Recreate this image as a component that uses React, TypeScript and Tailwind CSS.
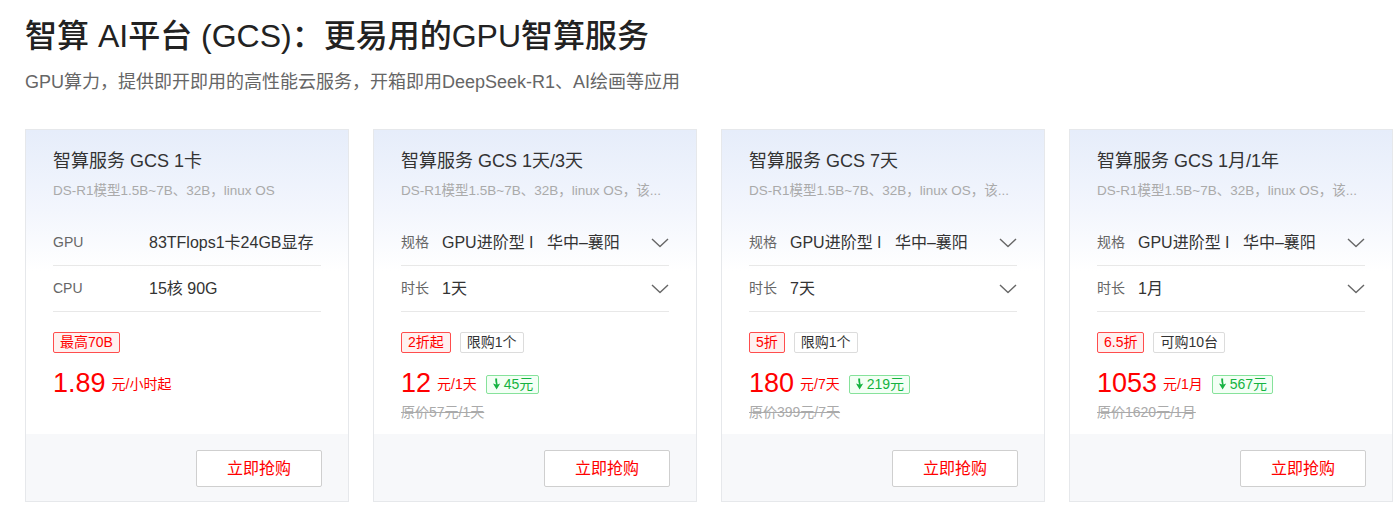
import React from "react";

type Row = { label: string; value: string; select?: boolean };
type Card = {
  title: string;
  desc: string;
  rows: Row[];
  redTag: string;
  grayTag?: string;
  price: string;
  unit: string;
  save?: string;
  original?: string;
  wideLabel?: boolean;
};

const longDesc = "DS-R1模型1.5B~7B、32B，linux OS，该...";

const cards: Card[] = [
  {
    title: "智算服务 GCS 1卡",
    desc: "DS-R1模型1.5B~7B、32B，linux OS",
    rows: [
      { label: "GPU", value: "83TFlops1卡24GB显存" },
      { label: "CPU", value: "15核 90G" },
    ],
    redTag: "最高70B",
    price: "1.89",
    unit: "元/小时起",
    wideLabel: true,
  },
  {
    title: "智算服务 GCS 1天/3天",
    desc: longDesc,
    rows: [
      { label: "规格", value: "GPU进阶型 I   华中–襄阳", select: true },
      { label: "时长", value: "1天", select: true },
    ],
    redTag: "2折起",
    grayTag: "限购1个",
    price: "12",
    unit: "元/1天",
    save: "45元",
    original: "原价57元/1天",
  },
  {
    title: "智算服务 GCS 7天",
    desc: longDesc,
    rows: [
      { label: "规格", value: "GPU进阶型 I   华中–襄阳", select: true },
      { label: "时长", value: "7天", select: true },
    ],
    redTag: "5折",
    grayTag: "限购1个",
    price: "180",
    unit: "元/7天",
    save: "219元",
    original: "原价399元/7天",
  },
  {
    title: "智算服务 GCS 1月/1年",
    desc: longDesc,
    rows: [
      { label: "规格", value: "GPU进阶型 I   华中–襄阳", select: true },
      { label: "时长", value: "1月", select: true },
    ],
    redTag: "6.5折",
    grayTag: "可购10台",
    price: "1053",
    unit: "元/1月",
    save: "567元",
    original: "原价1620元/1月",
  },
];

function Chevron() {
  return (
    <svg width="18" height="10" viewBox="0 0 18 10" fill="none">
      <polyline points="1,1 9,8.5 17,1" stroke="#666" strokeWidth="1.4" strokeLinejoin="round" />
    </svg>
  );
}

function DownArrow() {
  return (
    <svg width="9" height="12" viewBox="0 0 9 12" fill="none">
      <path d="M3.2 0.5 C3.2 3 3.6 5 4.2 6.5 L1 5.6 L4.6 11.5 L8.2 5.6 L5.6 6.4 C5.2 4.6 5 2.6 5.1 0.5 Z" fill="#15b341" />
    </svg>
  );
}

function ProductCard({ c }: { c: Card }) {
  return (
    <div className="w-[324px] h-[373px] shrink-0 border border-[#e6e8eb] flex flex-col bg-[linear-gradient(180deg,#e6edfa_0%,#f3f6fd_22%,#ffffff_38%)]">
      <div className="flex-1 px-[27px] pt-[18px]">
        <div className="text-[18px] leading-[26px] text-[#333]">{c.title}</div>
        <div className="mt-[7px] text-[13.5px] leading-[20px] text-[#aaa] whitespace-nowrap overflow-hidden">{c.desc}</div>
        <div className="mt-[19px]">
          {c.rows.map((r) => (
            <div key={r.label} className="h-[46px] flex items-center border-b border-[#e8e8e8]">
              <span className={`text-[14px] text-[#666] ${c.wideLabel ? "w-[96px]" : "w-[41px]"}`}>{r.label}</span>
              <span className="flex-1 text-[16px] text-[#333] whitespace-pre">{r.value}</span>
              {r.select && <Chevron />}
            </div>
          ))}
        </div>
        <div className="mt-[20px] flex gap-[9px]">
          <span className="h-[21px] px-[6px] flex items-center border border-[#ff4d4d] bg-[#fff1f0] rounded-[2px] text-[14px] text-[#f00]">
            {c.redTag}
          </span>
          {c.grayTag && (
            <span className="h-[21px] px-[6px] flex items-center border border-[#dcdcdc] rounded-[2px] text-[14px] text-[#333]">
              {c.grayTag}
            </span>
          )}
        </div>
        <div className="mt-[14px] flex items-center h-[32px]">
          <span className="text-[27px] leading-[32px] text-[#f00]">{c.price}</span>
          <span className="ml-[6px] mt-[3px] text-[14px] text-[#f00]">{c.unit}</span>
          {c.save && (
            <span className="ml-[9px] mt-[2px] h-[19px] px-[5px] flex items-center gap-[3px] border border-[#86e29b] bg-[#f3fff5] rounded-[2px] text-[14px] text-[#15b341]">
              <DownArrow />
              {c.save}
            </span>
          )}
        </div>
        {c.original && (
          <div className="mt-[3px] text-[14px] leading-[20px] text-[#aaa] line-through">{c.original}</div>
        )}
      </div>
      <div className="h-[67px] bg-[#f7f8fa] flex justify-end items-start pt-[16px] px-[26px]">
        <button className="w-[126px] h-[37px] bg-white border border-[#cfcfcf] rounded-[2px] text-[16px] text-[#f00]">
          立即抢购
        </button>
      </div>
    </div>
  );
}

export default function App() {
  return (
    <div
      className="w-[1400px] h-[511px] overflow-hidden bg-white pl-[25px] pt-[16px]"
      style={{ fontFamily: '"Liberation Sans", "Noto Sans CJK SC", sans-serif' }}
    >
      <h1 className="text-[32px] leading-[40px] font-medium text-[#222]">
        智算 AI平台 (GCS)：更易用的GPU智算服务
      </h1>
      <p className="mt-[13px] text-[18px] leading-[26px] text-[#666]">
        GPU算力，提供即开即用的高性能云服务，开箱即用DeepSeek-R1、AI绘画等应用
      </p>
      <div className="mt-[34px] flex gap-[24px]">
        {cards.map((c) => (
          <ProductCard key={c.title} c={c} />
        ))}
      </div>
    </div>
  );
}
